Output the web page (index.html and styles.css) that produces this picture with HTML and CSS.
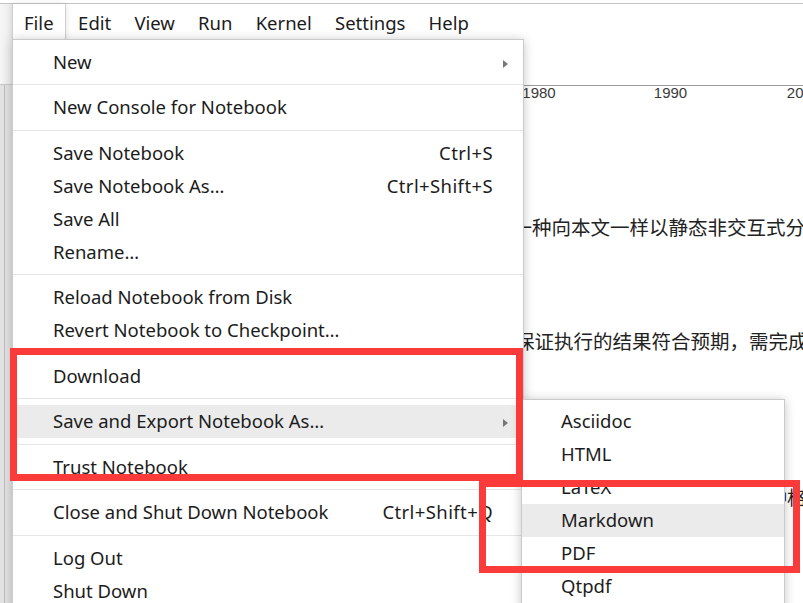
FILE: index.html
```html
<!DOCTYPE html>
<html lang="zh">
<head>
<meta charset="utf-8">
<title>Notebook</title>
<link rel="stylesheet" href="styles.css">
</head>
<body>
<div class="topline"></div>
<div class="app">
  <aside class="sidebar">
    <div class="sb-top"></div>
    <div class="sb-rest"><div class="sb-line"></div></div>
  </aside>
  <div class="rightcol">
    <nav class="menubar">
      <div class="mb-item active">File</div>
      <div class="mb-item">Edit</div>
      <div class="mb-item">View</div>
      <div class="mb-item">Run</div>
      <div class="mb-item">Kernel</div>
      <div class="mb-item">Settings</div>
      <div class="mb-item">Help</div>
    </nav>
    <main class="main">
      <svg class="chart" width="791" height="70" viewBox="0 0 791 70">
        <line x1="380" y1="45.5" x2="791" y2="45.5" stroke="#9a9a9a" stroke-width="1"/>
        <text x="527" y="58" text-anchor="middle" class="tick">1980</text>
        <text x="658.5" y="58" text-anchor="middle" class="tick">1990</text>
        <text x="791.5" y="58" text-anchor="middle" class="tick">2000</text>
      </svg>
      <p class="para p1">还有另一种向本文一样以静态非交互式分享笔记本的方式</p>
      <p class="para p2">为了保证执行的结果符合预期，需完成以下步骤</p>
      <p class="para p3">文件菜单中的导出功能可以生成多种格式的静态文档岩石</p>
    </main>
  </div>
</div>

<div class="menu main-menu">
  <div class="item"><span class="label">New</span><span class="sc"></span><span class="arrow-cell"><i class="arrow"></i></span></div>
  <div class="sep"></div>
  <div class="item"><span class="label">New Console for Notebook</span><span class="sc"></span><span class="arrow-cell"></span></div>
  <div class="sep"></div>
  <div class="item"><span class="label">Save Notebook</span><span class="sc">Ctrl+S</span><span class="arrow-cell"></span></div>
  <div class="item"><span class="label">Save Notebook As…</span><span class="sc">Ctrl+Shift+S</span><span class="arrow-cell"></span></div>
  <div class="item"><span class="label">Save All</span><span class="sc"></span><span class="arrow-cell"></span></div>
  <div class="item"><span class="label">Rename…</span><span class="sc"></span><span class="arrow-cell"></span></div>
  <div class="sep"></div>
  <div class="item"><span class="label">Reload Notebook from Disk</span><span class="sc"></span><span class="arrow-cell"></span></div>
  <div class="item"><span class="label">Revert Notebook to Checkpoint…</span><span class="sc"></span><span class="arrow-cell"></span></div>
  <div class="sep"></div>
  <div class="item"><span class="label">Download</span><span class="sc"></span><span class="arrow-cell"></span></div>
  <div class="sep"></div>
  <div class="item hover"><span class="label">Save and Export Notebook As…</span><span class="sc"></span><span class="arrow-cell"><i class="arrow"></i></span></div>
  <div class="sep"></div>
  <div class="item"><span class="label">Trust Notebook</span><span class="sc"></span><span class="arrow-cell"></span></div>
  <div class="sep"></div>
  <div class="item"><span class="label">Close and Shut Down Notebook</span><span class="sc">Ctrl+Shift+Q</span><span class="arrow-cell"></span></div>
  <div class="sep"></div>
  <div class="item"><span class="label">Log Out</span><span class="sc"></span><span class="arrow-cell"></span></div>
  <div class="item"><span class="label">Shut Down</span><span class="sc"></span><span class="arrow-cell"></span></div>
</div>

<div class="menu sub-menu">
  <div class="sitem">Asciidoc</div>
  <div class="sitem">HTML</div>
  <div class="sitem">LaTeX</div>
  <div class="sitem hover">Markdown</div>
  <div class="sitem">PDF</div>
  <div class="sitem">Qtpdf</div>
</div>

<div class="mark mark-1"></div>
<div class="mark mark-2"></div>
</body>
</html>
```

FILE: styles.css
```css
* { box-sizing: border-box; }

html, body {
  margin: 0;
  padding: 0;
}

body {
  width: 803px;
  height: 603px;
  overflow: hidden;
  position: relative;
  background: #ffffff;
  font-family: "Noto Sans", "Noto Sans CJK SC", sans-serif;
  color: #1c1c1c;
}

.topline {
  height: 4px;
  border-bottom: 1px solid #c4c4c4;
}

.app {
  display: flex;
  height: 599px;
}

.sidebar {
  width: 12px;
  flex: none;
  display: flex;
  flex-direction: column;
}

.sb-top {
  height: 81px;
  background: linear-gradient(to right, #f6f6f6, #ececec);
  border-bottom: 1px solid #c9c9c9;
}

.sb-rest {
  flex: 1;
  background: #e2e2e2;
  display: flex;
  padding-left: 4px;
}

.sb-line {
  width: 1px;
  background: #bdbdbd;
}

.rightcol {
  flex: 1;
  min-width: 0;
  display: flex;
  flex-direction: column;
}

.menubar {
  height: 36px;
  display: flex;
  align-items: stretch;
  font-size: 18.5px;
  line-height: 1;
}

.mb-item {
  display: flex;
  align-items: center;
  padding: 3px 11.6px 0;
  color: #1c1c1c;
}

.mb-item.active {
  padding: 3px 11px 0;
  background: #fff;
  border-left: 1px solid #cfcfcf;
  border-right: 1px solid #cfcfcf;
  box-shadow: 0 0 6px rgba(0,0,0,0.12);
  position: relative;
  z-index: 1;
}

.mb-item.active + .mb-item {
  padding-left: 12.5px;
}

.main {
  flex: 1;
  min-width: 0;
  overflow: hidden;
}

.chart {
  display: block;
}

.tick {
  font-family: "Liberation Sans", Arial, sans-serif;
  font-size: 15px;
  fill: #3a3a3a;
}

.para {
  margin: 0;
  white-space: nowrap;
  font-family: "Noto Sans CJK SC", sans-serif;
  font-size: 19.5px;
  line-height: 24px;
  color: #222;
}

.p1 { margin-top: 105px; margin-left: 442px; }
.p2 { margin-top: 90px; margin-left: 464px; }
.p3 { margin-top: 132px; margin-left: 463px; }

/* Menus */
.menu {
  position: absolute;
  background: #fff;
  border: 1px solid #cacaca;
  box-shadow: 0 1px 10px rgba(0,0,0,0.22);
  font-size: 18.5px;
  line-height: 1;
  color: #1c1c1c;
  padding: 5px 0;
}

.main-menu {
  left: 12px;
  top: 39px;
  width: 512px;
  z-index: 2;
}

.item {
  height: 33px;
  margin-left: 4px;
  padding-left: 36px;
  padding-top: 1px;
  display: grid;
  grid-template-columns: 1fr auto 30px;
  align-items: center;
  white-space: nowrap;
}

.item.hover,
.sitem.hover {
  background: #ebebeb;
}

.sc {
  text-align: right;
  letter-spacing: 0.4px;
}

.arrow-cell {
  display: flex;
  align-items: center;
  padding-left: 10px;
  height: 100%;
}

.arrow {
  display: block;
  width: 0;
  height: 0;
  border-left: 5px solid #777;
  border-top: 4px solid transparent;
  border-bottom: 4px solid transparent;
  margin-top: 3px;
}

.sep {
  height: 1px;
  background: #e6e6e6;
  margin: 6px 0 5.5px;
}

.sub-menu {
  left: 521px;
  top: 399px;
  width: 264px;
  height: 220px;
  z-index: 3;
}

.sitem {
  height: 33px;
  padding-left: 39px;
  display: flex;
  align-items: center;
}

.mark {
  position: absolute;
  border: 7px solid #fb3a3a;
  z-index: 5;
}

.mark-1 {
  left: 10px;
  top: 348px;
  width: 513px;
  height: 133px;
}

.mark-2 {
  left: 479px;
  top: 480px;
  width: 321px;
  height: 93px;
}
```
